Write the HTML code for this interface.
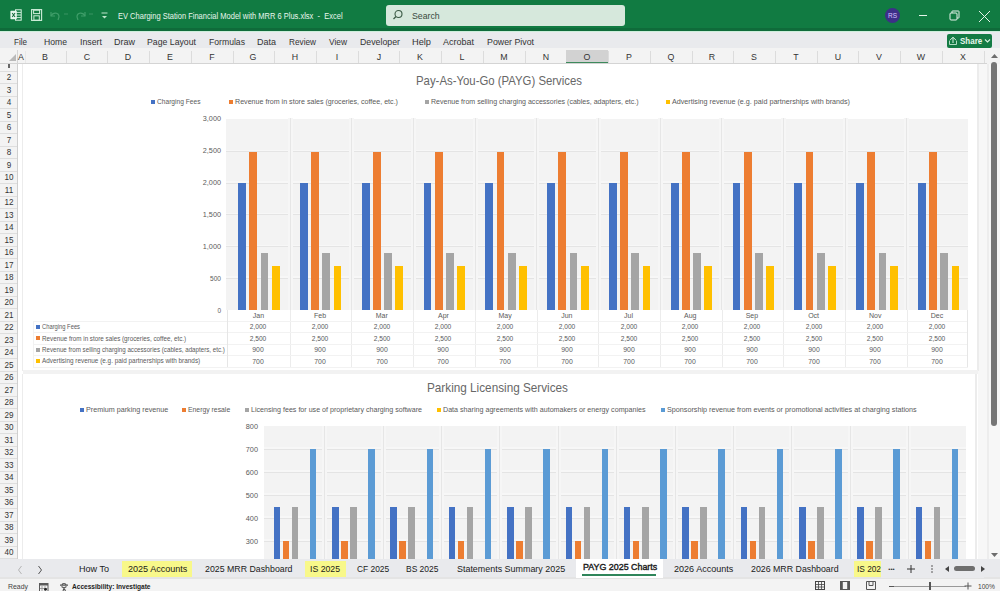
<!DOCTYPE html><html><head><meta charset='utf-8'><title>Excel</title><style>
*{margin:0;padding:0;box-sizing:border-box}
html,body{width:1000px;height:591px;overflow:hidden;background:#fff;font-family:"Liberation Sans", sans-serif;}
body{position:relative}
.ab{position:absolute}
.t{position:absolute;white-space:nowrap;line-height:1}
svg{position:absolute;overflow:visible}
</style></head><body>
<div class='ab' style='left:0px;top:0px;width:1000px;height:30px;background:#117b42;'></div>
<div class='ab' style='left:0px;top:28px;width:1000px;height:2.5px;background:#0f6b3a;'></div>
<div class='ab' style='left:0px;top:30.5px;width:1000px;height:1px;background:#cdeedb;'></div>
<svg style='left:10px;top:9px' width='12' height='12' viewBox='0 0 12 12'><rect x='5.5' y='0.8' width='5.7' height='10.4' fill='none' stroke='#d8f2e1' stroke-width='1'/><path d='M6 3.4 H11 M6 6 H11 M6 8.6 H11' stroke='#c9ebd5' stroke-width='1'/><rect x='0.4' y='1.8' width='6.4' height='8.4' rx='0.6' fill='#e6f7ec'/><path d='M2.2 4 L5 8 M5 4 L2.2 8' stroke='#1b6e40' stroke-width='1.1'/></svg>
<svg style='left:31px;top:9px' width='12' height='12' viewBox='0 0 12 12'><rect x='0.6' y='0.6' width='10' height='10.8' fill='none' stroke='#cfeeda' stroke-width='1.1'/><rect x='2.6' y='1.2' width='6' height='3.4' fill='none' stroke='#cfeeda' stroke-width='1'/><rect x='2.9' y='6.8' width='5.4' height='4.4' fill='none' stroke='#cfeeda' stroke-width='1'/></svg>
<svg style='left:48px;top:9px' width='14' height='12' viewBox='0 0 14 12'><path d='M3 3 L3 7 L7 7' fill='none' stroke='#3f9d69' stroke-width='1.2'/><path d='M3 7 C5 3 11 3 11 8 L10 11' fill='none' stroke='#3f9d69' stroke-width='1.2'/></svg>
<svg style='left:63px;top:13px' width='6' height='4' viewBox='0 0 6 4'><path d='M1 1 L5 1' stroke='#3a9463' stroke-width='1'/></svg>
<svg style='left:74px;top:9px' width='14' height='12' viewBox='0 0 14 12'><path d='M11 3 L11 7 L7 7' fill='none' stroke='#3f9d69' stroke-width='1.2'/><path d='M11 7 C9 3 3 3 3 8 L4 11' fill='none' stroke='#3f9d69' stroke-width='1.2'/></svg>
<svg style='left:88px;top:13px' width='6' height='4' viewBox='0 0 6 4'><path d='M1 1 L5 1' stroke='#3a9463' stroke-width='1'/></svg>
<svg style='left:100px;top:11px' width='9' height='9' viewBox='0 0 9 9'><path d='M1.5 2 L7.5 2' stroke='#bfe6cc' stroke-width='1'/><path d='M2 5 L7 5 L4.5 7.5 Z' fill='#bfe6cc'/></svg>
<div class='t' style='left:117.7px;top:15.5px;font-size:8.4px;color:#e8f6ec;font-weight:400;transform:translateY(-50%) scaleX(0.8969);transform-origin:left center;'>EV Charging Station Financial Model with MRR 6 Plus.xlsx&nbsp; -&nbsp; Excel</div>
<div class='ab' style='left:386px;top:5px;width:239px;height:21px;background:#d6e8dc;border-radius:3px'></div>
<svg style='left:392px;top:9px' width='12' height='12' viewBox='0 0 12 12'><circle cx='6.5' cy='5' r='3.5' fill='none' stroke='#3b5a45' stroke-width='1.1'/><path d='M4 7.5 L1.5 10' stroke='#3b5a45' stroke-width='1.2'/></svg>
<div class='t' style='left:412px;top:15.5px;font-size:9.5px;color:#3a4a40;font-weight:400;transform:translateY(-50%) scaleX(0.92);transform-origin:left center;'>Search</div>
<svg style='left:884px;top:7px' width='17' height='17' viewBox='0 0 17 17'><circle cx='8.5' cy='8.5' r='7.5' fill='#3d2f88'/><text x='8.5' y='11' font-size='6.5' fill='#d9c2ff' text-anchor='middle' font-family='Liberation Sans'>RS</text></svg>
<div class='ab' style='left:919px;top:15px;width:8px;height:1px;background:#e6f4ea;'></div>
<svg style='left:948.5px;top:10px' width='11' height='11' viewBox='0 0 11 11'><rect x='1' y='3' width='7' height='7' rx='1' fill='none' stroke='#e6f4ea' stroke-width='1'/><path d='M3 3 L3 1.2 Q3 1 3.5 1 L9.5 1 Q10 1 10 1.5 L10 7.5 Q10 8 9.5 8 L8 8' fill='none' stroke='#e6f4ea' stroke-width='1'/></svg>
<svg style='left:978px;top:9.5px' width='13' height='13' viewBox='0 0 13 13'><path d='M1 1 L12 12 M12 1 L1 12' stroke='#e6f4ea' stroke-width='1'/></svg>
<div class='ab' style='left:0px;top:31.5px;width:1000px;height:16.5px;background:#e9eaed;'></div>
<div class='t' style='left:14px;top:41.5px;font-size:9.5px;color:#333333;font-weight:400;transform:translateY(-50%) scaleX(0.849);transform-origin:left center;'>File</div>
<div class='t' style='left:44px;top:41.5px;font-size:9.5px;color:#333333;font-weight:400;transform:translateY(-50%) scaleX(0.9075);transform-origin:left center;'>Home</div>
<div class='t' style='left:80px;top:41.5px;font-size:9.5px;color:#333333;font-weight:400;transform:translateY(-50%) scaleX(0.9257);transform-origin:left center;'>Insert</div>
<div class='t' style='left:114px;top:41.5px;font-size:9.5px;color:#333333;font-weight:400;transform:translateY(-50%) scaleX(0.9471);transform-origin:left center;'>Draw</div>
<div class='t' style='left:147px;top:41.5px;font-size:9.5px;color:#333333;font-weight:400;transform:translateY(-50%) scaleX(0.9183);transform-origin:left center;'>Page Layout</div>
<div class='t' style='left:209px;top:41.5px;font-size:9.5px;color:#333333;font-weight:400;transform:translateY(-50%) scaleX(0.9092);transform-origin:left center;'>Formulas</div>
<div class='t' style='left:257px;top:41.5px;font-size:9.5px;color:#333333;font-weight:400;transform:translateY(-50%) scaleX(0.9463);transform-origin:left center;'>Data</div>
<div class='t' style='left:289px;top:41.5px;font-size:9.5px;color:#333333;font-weight:400;transform:translateY(-50%) scaleX(0.8666);transform-origin:left center;'>Review</div>
<div class='t' style='left:329px;top:41.5px;font-size:9.5px;color:#333333;font-weight:400;transform:translateY(-50%) scaleX(0.8814);transform-origin:left center;'>View</div>
<div class='t' style='left:360px;top:41.5px;font-size:9.5px;color:#333333;font-weight:400;transform:translateY(-50%) scaleX(0.9235);transform-origin:left center;'>Developer</div>
<div class='t' style='left:412px;top:41.5px;font-size:9.5px;color:#333333;font-weight:400;transform:translateY(-50%) scaleX(0.972);transform-origin:left center;'>Help</div>
<div class='t' style='left:443px;top:41.5px;font-size:9.5px;color:#333333;font-weight:400;transform:translateY(-50%) scaleX(0.9466);transform-origin:left center;'>Acrobat</div>
<div class='t' style='left:487px;top:41.5px;font-size:9.5px;color:#333333;font-weight:400;transform:translateY(-50%) scaleX(0.9273);transform-origin:left center;'>Power Pivot</div>
<div class='ab' style='left:946.5px;top:33.6px;width:45.7px;height:14.7px;background:#137b44;border-radius:2px'></div>
<svg style='left:948px;top:36px' width='10' height='10' viewBox='0 0 10 10'><path d='M1.5 5 L1.5 8.5 L8.5 8.5 L8.5 5' fill='none' stroke='#bfe8cf' stroke-width='0.9'/><path d='M5 1.2 L8.2 4.4 M5 1.2 L1.8 4.4 M5 1.5 L5 7' fill='none' stroke='#d9f3e2' stroke-width='1'/></svg>
<div class='t' style='left:959.8px;top:41.8px;font-size:9.2px;color:#e9f8ee;font-weight:700;transform:translateY(-50%) scaleX(0.869);transform-origin:left center;'>Share</div>
<svg style='left:984px;top:38px' width='7' height='6' viewBox='0 0 7 6'><path d='M1 1.5 L3.5 4 L6 1.5' fill='none' stroke='#d9f3e2' stroke-width='1.1'/></svg>
<div class='ab' style='left:0px;top:48px;width:987px;height:16px;background:#f3f3f3;'></div>
<div class='ab' style='left:0px;top:63px;width:987px;height:1px;background:#d4d4d4;'></div>
<svg style='left:8px;top:53px' width='9' height='9' viewBox='0 0 9 9'><path d='M8 1 L8 8 L1 8 Z' fill='#b9b9b9'/></svg>
<div class='ab' style='left:17px;top:50px;width:1px;height:14px;background:#d4d4d4;'></div>
<div class='ab' style='left:24.5px;top:51px;width:1px;height:12px;background:#e8e8e8;'></div>
<div class='t' style='left:20.8px;top:57px;font-size:9.6px;color:#333;font-weight:400;transform:translateX(-50%) translateY(-50%) scaleX(0.92);transform-origin:center center;'>A</div>
<div class='ab' style='left:65.72px;top:51px;width:1px;height:12px;background:#dcdcdc;'></div>
<div class='t' style='left:44.86px;top:57px;font-size:9.6px;color:#333;font-weight:400;transform:translateX(-50%) translateY(-50%) scaleX(0.92);transform-origin:center center;'>B</div>
<div class='ab' style='left:107.44px;top:51px;width:1px;height:12px;background:#dcdcdc;'></div>
<div class='t' style='left:86.58px;top:57px;font-size:9.6px;color:#333;font-weight:400;transform:translateX(-50%) translateY(-50%) scaleX(0.92);transform-origin:center center;'>C</div>
<div class='ab' style='left:149.16px;top:51px;width:1px;height:12px;background:#dcdcdc;'></div>
<div class='t' style='left:128.3px;top:57px;font-size:9.6px;color:#333;font-weight:400;transform:translateX(-50%) translateY(-50%) scaleX(0.92);transform-origin:center center;'>D</div>
<div class='ab' style='left:190.88px;top:51px;width:1px;height:12px;background:#dcdcdc;'></div>
<div class='t' style='left:170.02px;top:57px;font-size:9.6px;color:#333;font-weight:400;transform:translateX(-50%) translateY(-50%) scaleX(0.92);transform-origin:center center;'>E</div>
<div class='ab' style='left:232.6px;top:51px;width:1px;height:12px;background:#dcdcdc;'></div>
<div class='t' style='left:211.74px;top:57px;font-size:9.6px;color:#333;font-weight:400;transform:translateX(-50%) translateY(-50%) scaleX(0.92);transform-origin:center center;'>F</div>
<div class='ab' style='left:274.32px;top:51px;width:1px;height:12px;background:#dcdcdc;'></div>
<div class='t' style='left:253.46px;top:57px;font-size:9.6px;color:#333;font-weight:400;transform:translateX(-50%) translateY(-50%) scaleX(0.92);transform-origin:center center;'>G</div>
<div class='ab' style='left:316.04px;top:51px;width:1px;height:12px;background:#dcdcdc;'></div>
<div class='t' style='left:295.18px;top:57px;font-size:9.6px;color:#333;font-weight:400;transform:translateX(-50%) translateY(-50%) scaleX(0.92);transform-origin:center center;'>H</div>
<div class='ab' style='left:357.76px;top:51px;width:1px;height:12px;background:#dcdcdc;'></div>
<div class='t' style='left:336.9px;top:57px;font-size:9.6px;color:#333;font-weight:400;transform:translateX(-50%) translateY(-50%) scaleX(0.92);transform-origin:center center;'>I</div>
<div class='ab' style='left:399.48px;top:51px;width:1px;height:12px;background:#dcdcdc;'></div>
<div class='t' style='left:378.62px;top:57px;font-size:9.6px;color:#333;font-weight:400;transform:translateX(-50%) translateY(-50%) scaleX(0.92);transform-origin:center center;'>J</div>
<div class='ab' style='left:441.2px;top:51px;width:1px;height:12px;background:#dcdcdc;'></div>
<div class='t' style='left:420.34px;top:57px;font-size:9.6px;color:#333;font-weight:400;transform:translateX(-50%) translateY(-50%) scaleX(0.92);transform-origin:center center;'>K</div>
<div class='ab' style='left:482.92px;top:51px;width:1px;height:12px;background:#dcdcdc;'></div>
<div class='t' style='left:462.06px;top:57px;font-size:9.6px;color:#333;font-weight:400;transform:translateX(-50%) translateY(-50%) scaleX(0.92);transform-origin:center center;'>L</div>
<div class='ab' style='left:524.64px;top:51px;width:1px;height:12px;background:#dcdcdc;'></div>
<div class='t' style='left:503.78px;top:57px;font-size:9.6px;color:#333;font-weight:400;transform:translateX(-50%) translateY(-50%) scaleX(0.92);transform-origin:center center;'>M</div>
<div class='ab' style='left:566.36px;top:51px;width:1px;height:12px;background:#dcdcdc;'></div>
<div class='t' style='left:545.5px;top:57px;font-size:9.6px;color:#333;font-weight:400;transform:translateX(-50%) translateY(-50%) scaleX(0.92);transform-origin:center center;'>N</div>
<div class='ab' style='left:565.86px;top:50px;width:41.72px;height:13.5px;background:#d2d2d2;'></div>
<div class='ab' style='left:565.86px;top:61.8px;width:41.72px;height:1.7px;background:#3d8a5c;'></div>
<div class='ab' style='left:608.08px;top:51px;width:1px;height:12px;background:#dcdcdc;'></div>
<div class='t' style='left:587.22px;top:57px;font-size:9.6px;color:#333;font-weight:400;transform:translateX(-50%) translateY(-50%) scaleX(0.92);transform-origin:center center;'>O</div>
<div class='ab' style='left:649.8px;top:51px;width:1px;height:12px;background:#dcdcdc;'></div>
<div class='t' style='left:628.94px;top:57px;font-size:9.6px;color:#333;font-weight:400;transform:translateX(-50%) translateY(-50%) scaleX(0.92);transform-origin:center center;'>P</div>
<div class='ab' style='left:691.52px;top:51px;width:1px;height:12px;background:#dcdcdc;'></div>
<div class='t' style='left:670.66px;top:57px;font-size:9.6px;color:#333;font-weight:400;transform:translateX(-50%) translateY(-50%) scaleX(0.92);transform-origin:center center;'>Q</div>
<div class='ab' style='left:733.24px;top:51px;width:1px;height:12px;background:#dcdcdc;'></div>
<div class='t' style='left:712.38px;top:57px;font-size:9.6px;color:#333;font-weight:400;transform:translateX(-50%) translateY(-50%) scaleX(0.92);transform-origin:center center;'>R</div>
<div class='ab' style='left:774.96px;top:51px;width:1px;height:12px;background:#dcdcdc;'></div>
<div class='t' style='left:754.1px;top:57px;font-size:9.6px;color:#333;font-weight:400;transform:translateX(-50%) translateY(-50%) scaleX(0.92);transform-origin:center center;'>S</div>
<div class='ab' style='left:816.68px;top:51px;width:1px;height:12px;background:#dcdcdc;'></div>
<div class='t' style='left:795.82px;top:57px;font-size:9.6px;color:#333;font-weight:400;transform:translateX(-50%) translateY(-50%) scaleX(0.92);transform-origin:center center;'>T</div>
<div class='ab' style='left:858.4px;top:51px;width:1px;height:12px;background:#dcdcdc;'></div>
<div class='t' style='left:837.54px;top:57px;font-size:9.6px;color:#333;font-weight:400;transform:translateX(-50%) translateY(-50%) scaleX(0.92);transform-origin:center center;'>U</div>
<div class='ab' style='left:900.12px;top:51px;width:1px;height:12px;background:#dcdcdc;'></div>
<div class='t' style='left:879.26px;top:57px;font-size:9.6px;color:#333;font-weight:400;transform:translateX(-50%) translateY(-50%) scaleX(0.92);transform-origin:center center;'>V</div>
<div class='ab' style='left:941.84px;top:51px;width:1px;height:12px;background:#dcdcdc;'></div>
<div class='t' style='left:920.98px;top:57px;font-size:9.6px;color:#333;font-weight:400;transform:translateX(-50%) translateY(-50%) scaleX(0.92);transform-origin:center center;'>W</div>
<div class='ab' style='left:983.56px;top:51px;width:1px;height:12px;background:#dcdcdc;'></div>
<div class='t' style='left:962.7px;top:57px;font-size:9.6px;color:#333;font-weight:400;transform:translateX(-50%) translateY(-50%) scaleX(0.92);transform-origin:center center;'>X</div>
<div class='ab' style='left:0px;top:64px;width:17px;height:495px;background:#f3f3f3;'></div>
<div class='ab' style='left:17px;top:64px;width:1px;height:495px;background:#cfcfcf;'></div>
<div class='ab' style='left:0px;top:70.5px;width:17px;height:1px;background:#dedede;'></div>
<div class='ab' style='left:8px;top:64px;width:1.6px;height:4.2px;background:#666;'></div>
<div class='ab' style='left:0px;top:83.0px;width:17px;height:1px;background:#dedede;'></div>
<div class='t' style='left:8.5px;top:77.25px;font-size:9px;color:#333;font-weight:400;transform:translateX(-50%) translateY(-50%) scaleX(0.9);transform-origin:center center;'>2</div>
<div class='ab' style='left:0px;top:95.5px;width:17px;height:1px;background:#dedede;'></div>
<div class='t' style='left:8.5px;top:89.75px;font-size:9px;color:#333;font-weight:400;transform:translateX(-50%) translateY(-50%) scaleX(0.9);transform-origin:center center;'>3</div>
<div class='ab' style='left:0px;top:108.0px;width:17px;height:1px;background:#dedede;'></div>
<div class='t' style='left:8.5px;top:102.25px;font-size:9px;color:#333;font-weight:400;transform:translateX(-50%) translateY(-50%) scaleX(0.9);transform-origin:center center;'>4</div>
<div class='ab' style='left:0px;top:120.5px;width:17px;height:1px;background:#dedede;'></div>
<div class='t' style='left:8.5px;top:114.75px;font-size:9px;color:#333;font-weight:400;transform:translateX(-50%) translateY(-50%) scaleX(0.9);transform-origin:center center;'>5</div>
<div class='ab' style='left:0px;top:133.0px;width:17px;height:1px;background:#dedede;'></div>
<div class='t' style='left:8.5px;top:127.25px;font-size:9px;color:#333;font-weight:400;transform:translateX(-50%) translateY(-50%) scaleX(0.9);transform-origin:center center;'>6</div>
<div class='ab' style='left:0px;top:145.5px;width:17px;height:1px;background:#dedede;'></div>
<div class='t' style='left:8.5px;top:139.75px;font-size:9px;color:#333;font-weight:400;transform:translateX(-50%) translateY(-50%) scaleX(0.9);transform-origin:center center;'>7</div>
<div class='ab' style='left:0px;top:158.0px;width:17px;height:1px;background:#dedede;'></div>
<div class='t' style='left:8.5px;top:152.25px;font-size:9px;color:#333;font-weight:400;transform:translateX(-50%) translateY(-50%) scaleX(0.9);transform-origin:center center;'>8</div>
<div class='ab' style='left:0px;top:170.5px;width:17px;height:1px;background:#dedede;'></div>
<div class='t' style='left:8.5px;top:164.75px;font-size:9px;color:#333;font-weight:400;transform:translateX(-50%) translateY(-50%) scaleX(0.9);transform-origin:center center;'>9</div>
<div class='ab' style='left:0px;top:183.0px;width:17px;height:1px;background:#dedede;'></div>
<div class='t' style='left:8.5px;top:177.25px;font-size:9px;color:#333;font-weight:400;transform:translateX(-50%) translateY(-50%) scaleX(0.9);transform-origin:center center;'>10</div>
<div class='ab' style='left:0px;top:195.5px;width:17px;height:1px;background:#dedede;'></div>
<div class='t' style='left:8.5px;top:189.75px;font-size:9px;color:#333;font-weight:400;transform:translateX(-50%) translateY(-50%) scaleX(0.9);transform-origin:center center;'>11</div>
<div class='ab' style='left:0px;top:208.0px;width:17px;height:1px;background:#dedede;'></div>
<div class='t' style='left:8.5px;top:202.25px;font-size:9px;color:#333;font-weight:400;transform:translateX(-50%) translateY(-50%) scaleX(0.9);transform-origin:center center;'>12</div>
<div class='ab' style='left:0px;top:220.5px;width:17px;height:1px;background:#dedede;'></div>
<div class='t' style='left:8.5px;top:214.75px;font-size:9px;color:#333;font-weight:400;transform:translateX(-50%) translateY(-50%) scaleX(0.9);transform-origin:center center;'>13</div>
<div class='ab' style='left:0px;top:233.0px;width:17px;height:1px;background:#dedede;'></div>
<div class='t' style='left:8.5px;top:227.25px;font-size:9px;color:#333;font-weight:400;transform:translateX(-50%) translateY(-50%) scaleX(0.9);transform-origin:center center;'>14</div>
<div class='ab' style='left:0px;top:245.5px;width:17px;height:1px;background:#dedede;'></div>
<div class='t' style='left:8.5px;top:239.75px;font-size:9px;color:#333;font-weight:400;transform:translateX(-50%) translateY(-50%) scaleX(0.9);transform-origin:center center;'>15</div>
<div class='ab' style='left:0px;top:258.0px;width:17px;height:1px;background:#dedede;'></div>
<div class='t' style='left:8.5px;top:252.25px;font-size:9px;color:#333;font-weight:400;transform:translateX(-50%) translateY(-50%) scaleX(0.9);transform-origin:center center;'>16</div>
<div class='ab' style='left:0px;top:270.5px;width:17px;height:1px;background:#dedede;'></div>
<div class='t' style='left:8.5px;top:264.75px;font-size:9px;color:#333;font-weight:400;transform:translateX(-50%) translateY(-50%) scaleX(0.9);transform-origin:center center;'>17</div>
<div class='ab' style='left:0px;top:283.0px;width:17px;height:1px;background:#dedede;'></div>
<div class='t' style='left:8.5px;top:277.25px;font-size:9px;color:#333;font-weight:400;transform:translateX(-50%) translateY(-50%) scaleX(0.9);transform-origin:center center;'>18</div>
<div class='ab' style='left:0px;top:295.5px;width:17px;height:1px;background:#dedede;'></div>
<div class='t' style='left:8.5px;top:289.75px;font-size:9px;color:#333;font-weight:400;transform:translateX(-50%) translateY(-50%) scaleX(0.9);transform-origin:center center;'>19</div>
<div class='ab' style='left:0px;top:308.0px;width:17px;height:1px;background:#dedede;'></div>
<div class='t' style='left:8.5px;top:302.25px;font-size:9px;color:#333;font-weight:400;transform:translateX(-50%) translateY(-50%) scaleX(0.9);transform-origin:center center;'>20</div>
<div class='ab' style='left:0px;top:320.5px;width:17px;height:1px;background:#dedede;'></div>
<div class='t' style='left:8.5px;top:314.75px;font-size:9px;color:#333;font-weight:400;transform:translateX(-50%) translateY(-50%) scaleX(0.9);transform-origin:center center;'>21</div>
<div class='ab' style='left:0px;top:333.0px;width:17px;height:1px;background:#dedede;'></div>
<div class='t' style='left:8.5px;top:327.25px;font-size:9px;color:#333;font-weight:400;transform:translateX(-50%) translateY(-50%) scaleX(0.9);transform-origin:center center;'>22</div>
<div class='ab' style='left:0px;top:345.5px;width:17px;height:1px;background:#dedede;'></div>
<div class='t' style='left:8.5px;top:339.75px;font-size:9px;color:#333;font-weight:400;transform:translateX(-50%) translateY(-50%) scaleX(0.9);transform-origin:center center;'>23</div>
<div class='ab' style='left:0px;top:358.0px;width:17px;height:1px;background:#dedede;'></div>
<div class='t' style='left:8.5px;top:352.25px;font-size:9px;color:#333;font-weight:400;transform:translateX(-50%) translateY(-50%) scaleX(0.9);transform-origin:center center;'>24</div>
<div class='ab' style='left:0px;top:370.5px;width:17px;height:1px;background:#dedede;'></div>
<div class='t' style='left:8.5px;top:364.75px;font-size:9px;color:#333;font-weight:400;transform:translateX(-50%) translateY(-50%) scaleX(0.9);transform-origin:center center;'>25</div>
<div class='ab' style='left:0px;top:383.0px;width:17px;height:1px;background:#dedede;'></div>
<div class='t' style='left:8.5px;top:377.25px;font-size:9px;color:#333;font-weight:400;transform:translateX(-50%) translateY(-50%) scaleX(0.9);transform-origin:center center;'>26</div>
<div class='ab' style='left:0px;top:395.5px;width:17px;height:1px;background:#dedede;'></div>
<div class='t' style='left:8.5px;top:389.75px;font-size:9px;color:#333;font-weight:400;transform:translateX(-50%) translateY(-50%) scaleX(0.9);transform-origin:center center;'>27</div>
<div class='ab' style='left:0px;top:408.0px;width:17px;height:1px;background:#dedede;'></div>
<div class='t' style='left:8.5px;top:402.25px;font-size:9px;color:#333;font-weight:400;transform:translateX(-50%) translateY(-50%) scaleX(0.9);transform-origin:center center;'>28</div>
<div class='ab' style='left:0px;top:420.5px;width:17px;height:1px;background:#dedede;'></div>
<div class='t' style='left:8.5px;top:414.75px;font-size:9px;color:#333;font-weight:400;transform:translateX(-50%) translateY(-50%) scaleX(0.9);transform-origin:center center;'>29</div>
<div class='ab' style='left:0px;top:433.0px;width:17px;height:1px;background:#dedede;'></div>
<div class='t' style='left:8.5px;top:427.25px;font-size:9px;color:#333;font-weight:400;transform:translateX(-50%) translateY(-50%) scaleX(0.9);transform-origin:center center;'>30</div>
<div class='ab' style='left:0px;top:445.5px;width:17px;height:1px;background:#dedede;'></div>
<div class='t' style='left:8.5px;top:439.75px;font-size:9px;color:#333;font-weight:400;transform:translateX(-50%) translateY(-50%) scaleX(0.9);transform-origin:center center;'>31</div>
<div class='ab' style='left:0px;top:458.0px;width:17px;height:1px;background:#dedede;'></div>
<div class='t' style='left:8.5px;top:452.25px;font-size:9px;color:#333;font-weight:400;transform:translateX(-50%) translateY(-50%) scaleX(0.9);transform-origin:center center;'>32</div>
<div class='ab' style='left:0px;top:470.5px;width:17px;height:1px;background:#dedede;'></div>
<div class='t' style='left:8.5px;top:464.75px;font-size:9px;color:#333;font-weight:400;transform:translateX(-50%) translateY(-50%) scaleX(0.9);transform-origin:center center;'>33</div>
<div class='ab' style='left:0px;top:483.0px;width:17px;height:1px;background:#dedede;'></div>
<div class='t' style='left:8.5px;top:477.25px;font-size:9px;color:#333;font-weight:400;transform:translateX(-50%) translateY(-50%) scaleX(0.9);transform-origin:center center;'>34</div>
<div class='ab' style='left:0px;top:495.5px;width:17px;height:1px;background:#dedede;'></div>
<div class='t' style='left:8.5px;top:489.75px;font-size:9px;color:#333;font-weight:400;transform:translateX(-50%) translateY(-50%) scaleX(0.9);transform-origin:center center;'>35</div>
<div class='ab' style='left:0px;top:508.0px;width:17px;height:1px;background:#dedede;'></div>
<div class='t' style='left:8.5px;top:502.25px;font-size:9px;color:#333;font-weight:400;transform:translateX(-50%) translateY(-50%) scaleX(0.9);transform-origin:center center;'>36</div>
<div class='ab' style='left:0px;top:520.5px;width:17px;height:1px;background:#dedede;'></div>
<div class='t' style='left:8.5px;top:514.75px;font-size:9px;color:#333;font-weight:400;transform:translateX(-50%) translateY(-50%) scaleX(0.9);transform-origin:center center;'>37</div>
<div class='ab' style='left:0px;top:533.0px;width:17px;height:1px;background:#dedede;'></div>
<div class='t' style='left:8.5px;top:527.25px;font-size:9px;color:#333;font-weight:400;transform:translateX(-50%) translateY(-50%) scaleX(0.9);transform-origin:center center;'>38</div>
<div class='ab' style='left:0px;top:545.5px;width:17px;height:1px;background:#dedede;'></div>
<div class='t' style='left:8.5px;top:539.75px;font-size:9px;color:#333;font-weight:400;transform:translateX(-50%) translateY(-50%) scaleX(0.9);transform-origin:center center;'>39</div>
<div class='ab' style='left:0px;top:558.0px;width:17px;height:1px;background:#dedede;'></div>
<div class='t' style='left:8.5px;top:552.25px;font-size:9px;color:#333;font-weight:400;transform:translateX(-50%) translateY(-50%) scaleX(0.9);transform-origin:center center;'>40</div>
<div class='ab' style='left:978px;top:64px;width:22px;height:495px;background:#f7f7f7;'></div>
<div class='ab' style='left:987px;top:64px;width:2px;height:495px;background:#ededed;'></div>
<div class='ab' style='left:987px;top:48px;width:13px;height:16px;background:#f3f3f3;'></div>
<svg style='left:990px;top:53px' width='9' height='6' viewBox='0 0 9 6'><path d='M1 5 L4.5 1 L8 5 Z' fill='#6d6d6d'/></svg>
<div class='ab' style='left:991px;top:62px;width:6px;height:364px;background:#767676;border-radius:3px'></div>
<svg style='left:990px;top:552px' width='9' height='6' viewBox='0 0 9 6'><path d='M1 1 L4.5 5 L8 1 Z' fill='#6d6d6d'/></svg>
<div class='ab' style='left:22.5px;top:64px;width:955px;height:307px;background:#ffffff;'></div>
<div class='ab' style='left:21.8px;top:64px;width:1px;height:307px;background:#ececec;'></div>
<div class='ab' style='left:977px;top:64px;width:1.5px;height:307px;background:#ececec;'></div>
<div class='t' style='left:416px;top:80.5px;font-size:13.3px;color:#676767;font-weight:400;transform:translateY(-50%) scaleX(0.8552);transform-origin:left center;'>Pay-As-You-Go (PAYG) Services</div>
<div class='ab' style='left:150.5px;top:100px;width:4px;height:4px;background:#4472c4;'></div>
<div class='t' style='left:156.5px;top:102.4px;font-size:7.5px;color:#5a5a5a;font-weight:400;transform:translateY(-50%) scaleX(0.8841);transform-origin:left center;'>Charging Fees</div>
<div class='ab' style='left:228.6px;top:100px;width:4px;height:4px;background:#ed7d31;'></div>
<div class='t' style='left:234.6px;top:102.4px;font-size:7.5px;color:#5a5a5a;font-weight:400;transform:translateY(-50%) scaleX(0.9475);transform-origin:left center;'>Revenue from in store sales (groceries, coffee, etc.)</div>
<div class='ab' style='left:425px;top:100px;width:4px;height:4px;background:#a5a5a5;'></div>
<div class='t' style='left:431.1px;top:102.4px;font-size:7.5px;color:#5a5a5a;font-weight:400;transform:translateY(-50%) scaleX(0.9378);transform-origin:left center;'>Revenue from selling charging accessories (cables, adapters, etc.)</div>
<div class='ab' style='left:665.8px;top:100px;width:4px;height:4px;background:#ffc000;'></div>
<div class='t' style='left:672.2px;top:102.4px;font-size:7.5px;color:#5a5a5a;font-weight:400;transform:translateY(-50%) scaleX(0.9573);transform-origin:left center;'>Advertising revenue (e.g. paid partnerships with brands)</div>
<div class='ab' style='left:226.3px;top:119px;width:741.5px;height:191px;background:#f3f3f3;'></div>
<div class='t' style='left:221px;top:309.8px;font-size:7px;color:#5a5a5a;font-weight:400;transform:translateX(-100%) translateY(-50%) scaleX(0.9216);transform-origin:right center;'>0</div>
<div class='ab' style='left:226.3px;top:276.3px;width:741.5px;height:2px;background:#f7f7f7;'></div>
<div class='ab' style='left:226.3px;top:277.8px;width:741.5px;height:1px;background:#e4e4e4;'></div>
<div class='t' style='left:221px;top:277.8px;font-size:7px;color:#5a5a5a;font-weight:400;transform:translateX(-100%) translateY(-50%) scaleX(0.9343);transform-origin:right center;'>500</div>
<div class='ab' style='left:226.3px;top:244.6px;width:741.5px;height:2px;background:#f7f7f7;'></div>
<div class='ab' style='left:226.3px;top:246.1px;width:741.5px;height:1px;background:#e4e4e4;'></div>
<div class='t' style='left:221px;top:245.8px;font-size:7px;color:#5a5a5a;font-weight:400;transform:translateX(-100%) translateY(-50%) scaleX(1.0381);transform-origin:right center;'>1,000</div>
<div class='ab' style='left:226.3px;top:212.9px;width:741.5px;height:2px;background:#f7f7f7;'></div>
<div class='ab' style='left:226.3px;top:214.4px;width:741.5px;height:1px;background:#e4e4e4;'></div>
<div class='t' style='left:221px;top:213.8px;font-size:7px;color:#5a5a5a;font-weight:400;transform:translateX(-100%) translateY(-50%) scaleX(1.0381);transform-origin:right center;'>1,500</div>
<div class='ab' style='left:226.3px;top:181.2px;width:741.5px;height:2px;background:#f7f7f7;'></div>
<div class='ab' style='left:226.3px;top:182.7px;width:741.5px;height:1px;background:#e4e4e4;'></div>
<div class='t' style='left:221px;top:181.8px;font-size:7px;color:#5a5a5a;font-weight:400;transform:translateX(-100%) translateY(-50%) scaleX(1.0381);transform-origin:right center;'>2,000</div>
<div class='ab' style='left:226.3px;top:149.5px;width:741.5px;height:2px;background:#f7f7f7;'></div>
<div class='ab' style='left:226.3px;top:151.0px;width:741.5px;height:1px;background:#e4e4e4;'></div>
<div class='t' style='left:221px;top:149.8px;font-size:7px;color:#5a5a5a;font-weight:400;transform:translateX(-100%) translateY(-50%) scaleX(1.0381);transform-origin:right center;'>2,500</div>
<div class='t' style='left:221px;top:117.8px;font-size:7px;color:#5a5a5a;font-weight:400;transform:translateX(-100%) translateY(-50%) scaleX(1.0381);transform-origin:right center;'>3,000</div>
<div class='ab' style='left:287.58px;top:118.2px;width:2px;height:191.8px;background:#f6f6f6;'></div>
<div class='ab' style='left:290.58px;top:118.2px;width:2px;height:191.8px;background:#f6f6f6;'></div>
<div class='ab' style='left:289.58px;top:118.2px;width:1px;height:191.8px;background:#e6e6e6;'></div>
<div class='ab' style='left:289.78px;top:310px;width:1px;height:57px;background:#ececec;'></div>
<div class='ab' style='left:349.27px;top:118.2px;width:2px;height:191.8px;background:#f6f6f6;'></div>
<div class='ab' style='left:352.27px;top:118.2px;width:2px;height:191.8px;background:#f6f6f6;'></div>
<div class='ab' style='left:351.27px;top:118.2px;width:1px;height:191.8px;background:#e6e6e6;'></div>
<div class='ab' style='left:351.47px;top:310px;width:1px;height:57px;background:#ececec;'></div>
<div class='ab' style='left:410.95px;top:118.2px;width:2px;height:191.8px;background:#f6f6f6;'></div>
<div class='ab' style='left:413.95px;top:118.2px;width:2px;height:191.8px;background:#f6f6f6;'></div>
<div class='ab' style='left:412.95px;top:118.2px;width:1px;height:191.8px;background:#e6e6e6;'></div>
<div class='ab' style='left:413.15px;top:310px;width:1px;height:57px;background:#ececec;'></div>
<div class='ab' style='left:472.63px;top:118.2px;width:2px;height:191.8px;background:#f6f6f6;'></div>
<div class='ab' style='left:475.63px;top:118.2px;width:2px;height:191.8px;background:#f6f6f6;'></div>
<div class='ab' style='left:474.63px;top:118.2px;width:1px;height:191.8px;background:#e6e6e6;'></div>
<div class='ab' style='left:474.83px;top:310px;width:1px;height:57px;background:#ececec;'></div>
<div class='ab' style='left:534.32px;top:118.2px;width:2px;height:191.8px;background:#f6f6f6;'></div>
<div class='ab' style='left:537.32px;top:118.2px;width:2px;height:191.8px;background:#f6f6f6;'></div>
<div class='ab' style='left:536.32px;top:118.2px;width:1px;height:191.8px;background:#e6e6e6;'></div>
<div class='ab' style='left:536.52px;top:310px;width:1px;height:57px;background:#ececec;'></div>
<div class='ab' style='left:596.0px;top:118.2px;width:2px;height:191.8px;background:#f6f6f6;'></div>
<div class='ab' style='left:599.0px;top:118.2px;width:2px;height:191.8px;background:#f6f6f6;'></div>
<div class='ab' style='left:598.0px;top:118.2px;width:1px;height:191.8px;background:#e6e6e6;'></div>
<div class='ab' style='left:598.2px;top:310px;width:1px;height:57px;background:#ececec;'></div>
<div class='ab' style='left:657.68px;top:118.2px;width:2px;height:191.8px;background:#f6f6f6;'></div>
<div class='ab' style='left:660.68px;top:118.2px;width:2px;height:191.8px;background:#f6f6f6;'></div>
<div class='ab' style='left:659.68px;top:118.2px;width:1px;height:191.8px;background:#e6e6e6;'></div>
<div class='ab' style='left:659.88px;top:310px;width:1px;height:57px;background:#ececec;'></div>
<div class='ab' style='left:719.37px;top:118.2px;width:2px;height:191.8px;background:#f6f6f6;'></div>
<div class='ab' style='left:722.37px;top:118.2px;width:2px;height:191.8px;background:#f6f6f6;'></div>
<div class='ab' style='left:721.37px;top:118.2px;width:1px;height:191.8px;background:#e6e6e6;'></div>
<div class='ab' style='left:721.57px;top:310px;width:1px;height:57px;background:#ececec;'></div>
<div class='ab' style='left:781.05px;top:118.2px;width:2px;height:191.8px;background:#f6f6f6;'></div>
<div class='ab' style='left:784.05px;top:118.2px;width:2px;height:191.8px;background:#f6f6f6;'></div>
<div class='ab' style='left:783.05px;top:118.2px;width:1px;height:191.8px;background:#e6e6e6;'></div>
<div class='ab' style='left:783.25px;top:310px;width:1px;height:57px;background:#ececec;'></div>
<div class='ab' style='left:842.73px;top:118.2px;width:2px;height:191.8px;background:#f6f6f6;'></div>
<div class='ab' style='left:845.73px;top:118.2px;width:2px;height:191.8px;background:#f6f6f6;'></div>
<div class='ab' style='left:844.73px;top:118.2px;width:1px;height:191.8px;background:#e6e6e6;'></div>
<div class='ab' style='left:844.93px;top:310px;width:1px;height:57px;background:#ececec;'></div>
<div class='ab' style='left:904.42px;top:118.2px;width:2px;height:191.8px;background:#f6f6f6;'></div>
<div class='ab' style='left:907.42px;top:118.2px;width:2px;height:191.8px;background:#f6f6f6;'></div>
<div class='ab' style='left:906.42px;top:118.2px;width:1px;height:191.8px;background:#e6e6e6;'></div>
<div class='ab' style='left:906.62px;top:310px;width:1px;height:57px;background:#ececec;'></div>
<div class='ab' style='left:238.2px;top:183.2px;width:7.8px;height:126.8px;background:#4472c4;'></div>
<div class='ab' style='left:249.37px;top:151.5px;width:7.8px;height:158.5px;background:#ed7d31;'></div>
<div class='ab' style='left:260.54px;top:252.94px;width:7.8px;height:57.06px;background:#a5a5a5;'></div>
<div class='ab' style='left:271.71px;top:265.62px;width:7.8px;height:44.38px;background:#ffc000;'></div>
<div class='t' style='left:258.44px;top:315.2px;font-size:7px;color:#5a5a5a;font-weight:400;transform:translateX(-50%) translateY(-50%);transform-origin:center center;'>Jan</div>
<div class='t' style='left:258.44px;top:326.4px;font-size:7px;color:#5a5a5a;font-weight:400;transform:translateX(-50%) translateY(-50%) scaleX(0.9469);transform-origin:center center;'>2,000</div>
<div class='t' style='left:258.44px;top:338px;font-size:7px;color:#5a5a5a;font-weight:400;transform:translateX(-50%) translateY(-50%) scaleX(0.9469);transform-origin:center center;'>2,500</div>
<div class='t' style='left:258.44px;top:349.2px;font-size:7px;color:#5a5a5a;font-weight:400;transform:translateX(-50%) translateY(-50%) scaleX(0.984);transform-origin:center center;'>900</div>
<div class='t' style='left:258.44px;top:360.5px;font-size:7px;color:#5a5a5a;font-weight:400;transform:translateX(-50%) translateY(-50%) scaleX(0.984);transform-origin:center center;'>700</div>
<div class='ab' style='left:300.01px;top:183.2px;width:7.8px;height:126.8px;background:#4472c4;'></div>
<div class='ab' style='left:311.18px;top:151.5px;width:7.8px;height:158.5px;background:#ed7d31;'></div>
<div class='ab' style='left:322.35px;top:252.94px;width:7.8px;height:57.06px;background:#a5a5a5;'></div>
<div class='ab' style='left:333.52px;top:265.62px;width:7.8px;height:44.38px;background:#ffc000;'></div>
<div class='t' style='left:320.12px;top:315.2px;font-size:7px;color:#5a5a5a;font-weight:400;transform:translateX(-50%) translateY(-50%);transform-origin:center center;'>Feb</div>
<div class='t' style='left:320.12px;top:326.4px;font-size:7px;color:#5a5a5a;font-weight:400;transform:translateX(-50%) translateY(-50%) scaleX(0.9469);transform-origin:center center;'>2,000</div>
<div class='t' style='left:320.12px;top:338px;font-size:7px;color:#5a5a5a;font-weight:400;transform:translateX(-50%) translateY(-50%) scaleX(0.9469);transform-origin:center center;'>2,500</div>
<div class='t' style='left:320.12px;top:349.2px;font-size:7px;color:#5a5a5a;font-weight:400;transform:translateX(-50%) translateY(-50%) scaleX(0.984);transform-origin:center center;'>900</div>
<div class='t' style='left:320.12px;top:360.5px;font-size:7px;color:#5a5a5a;font-weight:400;transform:translateX(-50%) translateY(-50%) scaleX(0.984);transform-origin:center center;'>700</div>
<div class='ab' style='left:361.82px;top:183.2px;width:7.8px;height:126.8px;background:#4472c4;'></div>
<div class='ab' style='left:372.99px;top:151.5px;width:7.8px;height:158.5px;background:#ed7d31;'></div>
<div class='ab' style='left:384.16px;top:252.94px;width:7.8px;height:57.06px;background:#a5a5a5;'></div>
<div class='ab' style='left:395.33px;top:265.62px;width:7.8px;height:44.38px;background:#ffc000;'></div>
<div class='t' style='left:381.81px;top:315.2px;font-size:7px;color:#5a5a5a;font-weight:400;transform:translateX(-50%) translateY(-50%);transform-origin:center center;'>Mar</div>
<div class='t' style='left:381.81px;top:326.4px;font-size:7px;color:#5a5a5a;font-weight:400;transform:translateX(-50%) translateY(-50%) scaleX(0.9469);transform-origin:center center;'>2,000</div>
<div class='t' style='left:381.81px;top:338px;font-size:7px;color:#5a5a5a;font-weight:400;transform:translateX(-50%) translateY(-50%) scaleX(0.9469);transform-origin:center center;'>2,500</div>
<div class='t' style='left:381.81px;top:349.2px;font-size:7px;color:#5a5a5a;font-weight:400;transform:translateX(-50%) translateY(-50%) scaleX(0.984);transform-origin:center center;'>900</div>
<div class='t' style='left:381.81px;top:360.5px;font-size:7px;color:#5a5a5a;font-weight:400;transform:translateX(-50%) translateY(-50%) scaleX(0.984);transform-origin:center center;'>700</div>
<div class='ab' style='left:423.63px;top:183.2px;width:7.8px;height:126.8px;background:#4472c4;'></div>
<div class='ab' style='left:434.8px;top:151.5px;width:7.8px;height:158.5px;background:#ed7d31;'></div>
<div class='ab' style='left:445.97px;top:252.94px;width:7.8px;height:57.06px;background:#a5a5a5;'></div>
<div class='ab' style='left:457.14px;top:265.62px;width:7.8px;height:44.38px;background:#ffc000;'></div>
<div class='t' style='left:443.49px;top:315.2px;font-size:7px;color:#5a5a5a;font-weight:400;transform:translateX(-50%) translateY(-50%);transform-origin:center center;'>Apr</div>
<div class='t' style='left:443.49px;top:326.4px;font-size:7px;color:#5a5a5a;font-weight:400;transform:translateX(-50%) translateY(-50%) scaleX(0.9469);transform-origin:center center;'>2,000</div>
<div class='t' style='left:443.49px;top:338px;font-size:7px;color:#5a5a5a;font-weight:400;transform:translateX(-50%) translateY(-50%) scaleX(0.9469);transform-origin:center center;'>2,500</div>
<div class='t' style='left:443.49px;top:349.2px;font-size:7px;color:#5a5a5a;font-weight:400;transform:translateX(-50%) translateY(-50%) scaleX(0.984);transform-origin:center center;'>900</div>
<div class='t' style='left:443.49px;top:360.5px;font-size:7px;color:#5a5a5a;font-weight:400;transform:translateX(-50%) translateY(-50%) scaleX(0.984);transform-origin:center center;'>700</div>
<div class='ab' style='left:485.44px;top:183.2px;width:7.8px;height:126.8px;background:#4472c4;'></div>
<div class='ab' style='left:496.61px;top:151.5px;width:7.8px;height:158.5px;background:#ed7d31;'></div>
<div class='ab' style='left:507.78px;top:252.94px;width:7.8px;height:57.06px;background:#a5a5a5;'></div>
<div class='ab' style='left:518.95px;top:265.62px;width:7.8px;height:44.38px;background:#ffc000;'></div>
<div class='t' style='left:505.17px;top:315.2px;font-size:7px;color:#5a5a5a;font-weight:400;transform:translateX(-50%) translateY(-50%);transform-origin:center center;'>May</div>
<div class='t' style='left:505.17px;top:326.4px;font-size:7px;color:#5a5a5a;font-weight:400;transform:translateX(-50%) translateY(-50%) scaleX(0.9469);transform-origin:center center;'>2,000</div>
<div class='t' style='left:505.17px;top:338px;font-size:7px;color:#5a5a5a;font-weight:400;transform:translateX(-50%) translateY(-50%) scaleX(0.9469);transform-origin:center center;'>2,500</div>
<div class='t' style='left:505.17px;top:349.2px;font-size:7px;color:#5a5a5a;font-weight:400;transform:translateX(-50%) translateY(-50%) scaleX(0.984);transform-origin:center center;'>900</div>
<div class='t' style='left:505.17px;top:360.5px;font-size:7px;color:#5a5a5a;font-weight:400;transform:translateX(-50%) translateY(-50%) scaleX(0.984);transform-origin:center center;'>700</div>
<div class='ab' style='left:547.25px;top:183.2px;width:7.8px;height:126.8px;background:#4472c4;'></div>
<div class='ab' style='left:558.42px;top:151.5px;width:7.8px;height:158.5px;background:#ed7d31;'></div>
<div class='ab' style='left:569.59px;top:252.94px;width:7.8px;height:57.06px;background:#a5a5a5;'></div>
<div class='ab' style='left:580.76px;top:265.62px;width:7.8px;height:44.38px;background:#ffc000;'></div>
<div class='t' style='left:566.86px;top:315.2px;font-size:7px;color:#5a5a5a;font-weight:400;transform:translateX(-50%) translateY(-50%);transform-origin:center center;'>Jun</div>
<div class='t' style='left:566.86px;top:326.4px;font-size:7px;color:#5a5a5a;font-weight:400;transform:translateX(-50%) translateY(-50%) scaleX(0.9469);transform-origin:center center;'>2,000</div>
<div class='t' style='left:566.86px;top:338px;font-size:7px;color:#5a5a5a;font-weight:400;transform:translateX(-50%) translateY(-50%) scaleX(0.9469);transform-origin:center center;'>2,500</div>
<div class='t' style='left:566.86px;top:349.2px;font-size:7px;color:#5a5a5a;font-weight:400;transform:translateX(-50%) translateY(-50%) scaleX(0.984);transform-origin:center center;'>900</div>
<div class='t' style='left:566.86px;top:360.5px;font-size:7px;color:#5a5a5a;font-weight:400;transform:translateX(-50%) translateY(-50%) scaleX(0.984);transform-origin:center center;'>700</div>
<div class='ab' style='left:609.06px;top:183.2px;width:7.8px;height:126.8px;background:#4472c4;'></div>
<div class='ab' style='left:620.23px;top:151.5px;width:7.8px;height:158.5px;background:#ed7d31;'></div>
<div class='ab' style='left:631.4px;top:252.94px;width:7.8px;height:57.06px;background:#a5a5a5;'></div>
<div class='ab' style='left:642.57px;top:265.62px;width:7.8px;height:44.38px;background:#ffc000;'></div>
<div class='t' style='left:628.54px;top:315.2px;font-size:7px;color:#5a5a5a;font-weight:400;transform:translateX(-50%) translateY(-50%);transform-origin:center center;'>Jul</div>
<div class='t' style='left:628.54px;top:326.4px;font-size:7px;color:#5a5a5a;font-weight:400;transform:translateX(-50%) translateY(-50%) scaleX(0.9469);transform-origin:center center;'>2,000</div>
<div class='t' style='left:628.54px;top:338px;font-size:7px;color:#5a5a5a;font-weight:400;transform:translateX(-50%) translateY(-50%) scaleX(0.9469);transform-origin:center center;'>2,500</div>
<div class='t' style='left:628.54px;top:349.2px;font-size:7px;color:#5a5a5a;font-weight:400;transform:translateX(-50%) translateY(-50%) scaleX(0.984);transform-origin:center center;'>900</div>
<div class='t' style='left:628.54px;top:360.5px;font-size:7px;color:#5a5a5a;font-weight:400;transform:translateX(-50%) translateY(-50%) scaleX(0.984);transform-origin:center center;'>700</div>
<div class='ab' style='left:670.87px;top:183.2px;width:7.8px;height:126.8px;background:#4472c4;'></div>
<div class='ab' style='left:682.04px;top:151.5px;width:7.8px;height:158.5px;background:#ed7d31;'></div>
<div class='ab' style='left:693.21px;top:252.94px;width:7.8px;height:57.06px;background:#a5a5a5;'></div>
<div class='ab' style='left:704.38px;top:265.62px;width:7.8px;height:44.38px;background:#ffc000;'></div>
<div class='t' style='left:690.23px;top:315.2px;font-size:7px;color:#5a5a5a;font-weight:400;transform:translateX(-50%) translateY(-50%);transform-origin:center center;'>Aug</div>
<div class='t' style='left:690.23px;top:326.4px;font-size:7px;color:#5a5a5a;font-weight:400;transform:translateX(-50%) translateY(-50%) scaleX(0.9469);transform-origin:center center;'>2,000</div>
<div class='t' style='left:690.23px;top:338px;font-size:7px;color:#5a5a5a;font-weight:400;transform:translateX(-50%) translateY(-50%) scaleX(0.9469);transform-origin:center center;'>2,500</div>
<div class='t' style='left:690.23px;top:349.2px;font-size:7px;color:#5a5a5a;font-weight:400;transform:translateX(-50%) translateY(-50%) scaleX(0.984);transform-origin:center center;'>900</div>
<div class='t' style='left:690.23px;top:360.5px;font-size:7px;color:#5a5a5a;font-weight:400;transform:translateX(-50%) translateY(-50%) scaleX(0.984);transform-origin:center center;'>700</div>
<div class='ab' style='left:732.68px;top:183.2px;width:7.8px;height:126.8px;background:#4472c4;'></div>
<div class='ab' style='left:743.85px;top:151.5px;width:7.8px;height:158.5px;background:#ed7d31;'></div>
<div class='ab' style='left:755.02px;top:252.94px;width:7.8px;height:57.06px;background:#a5a5a5;'></div>
<div class='ab' style='left:766.19px;top:265.62px;width:7.8px;height:44.38px;background:#ffc000;'></div>
<div class='t' style='left:751.91px;top:315.2px;font-size:7px;color:#5a5a5a;font-weight:400;transform:translateX(-50%) translateY(-50%);transform-origin:center center;'>Sep</div>
<div class='t' style='left:751.91px;top:326.4px;font-size:7px;color:#5a5a5a;font-weight:400;transform:translateX(-50%) translateY(-50%) scaleX(0.9469);transform-origin:center center;'>2,000</div>
<div class='t' style='left:751.91px;top:338px;font-size:7px;color:#5a5a5a;font-weight:400;transform:translateX(-50%) translateY(-50%) scaleX(0.9469);transform-origin:center center;'>2,500</div>
<div class='t' style='left:751.91px;top:349.2px;font-size:7px;color:#5a5a5a;font-weight:400;transform:translateX(-50%) translateY(-50%) scaleX(0.984);transform-origin:center center;'>900</div>
<div class='t' style='left:751.91px;top:360.5px;font-size:7px;color:#5a5a5a;font-weight:400;transform:translateX(-50%) translateY(-50%) scaleX(0.984);transform-origin:center center;'>700</div>
<div class='ab' style='left:794.49px;top:183.2px;width:7.8px;height:126.8px;background:#4472c4;'></div>
<div class='ab' style='left:805.66px;top:151.5px;width:7.8px;height:158.5px;background:#ed7d31;'></div>
<div class='ab' style='left:816.83px;top:252.94px;width:7.8px;height:57.06px;background:#a5a5a5;'></div>
<div class='ab' style='left:828.0px;top:265.62px;width:7.8px;height:44.38px;background:#ffc000;'></div>
<div class='t' style='left:813.59px;top:315.2px;font-size:7px;color:#5a5a5a;font-weight:400;transform:translateX(-50%) translateY(-50%);transform-origin:center center;'>Oct</div>
<div class='t' style='left:813.59px;top:326.4px;font-size:7px;color:#5a5a5a;font-weight:400;transform:translateX(-50%) translateY(-50%) scaleX(0.9469);transform-origin:center center;'>2,000</div>
<div class='t' style='left:813.59px;top:338px;font-size:7px;color:#5a5a5a;font-weight:400;transform:translateX(-50%) translateY(-50%) scaleX(0.9469);transform-origin:center center;'>2,500</div>
<div class='t' style='left:813.59px;top:349.2px;font-size:7px;color:#5a5a5a;font-weight:400;transform:translateX(-50%) translateY(-50%) scaleX(0.984);transform-origin:center center;'>900</div>
<div class='t' style='left:813.59px;top:360.5px;font-size:7px;color:#5a5a5a;font-weight:400;transform:translateX(-50%) translateY(-50%) scaleX(0.984);transform-origin:center center;'>700</div>
<div class='ab' style='left:856.3px;top:183.2px;width:7.8px;height:126.8px;background:#4472c4;'></div>
<div class='ab' style='left:867.47px;top:151.5px;width:7.8px;height:158.5px;background:#ed7d31;'></div>
<div class='ab' style='left:878.64px;top:252.94px;width:7.8px;height:57.06px;background:#a5a5a5;'></div>
<div class='ab' style='left:889.81px;top:265.62px;width:7.8px;height:44.38px;background:#ffc000;'></div>
<div class='t' style='left:875.27px;top:315.2px;font-size:7px;color:#5a5a5a;font-weight:400;transform:translateX(-50%) translateY(-50%);transform-origin:center center;'>Nov</div>
<div class='t' style='left:875.27px;top:326.4px;font-size:7px;color:#5a5a5a;font-weight:400;transform:translateX(-50%) translateY(-50%) scaleX(0.9469);transform-origin:center center;'>2,000</div>
<div class='t' style='left:875.27px;top:338px;font-size:7px;color:#5a5a5a;font-weight:400;transform:translateX(-50%) translateY(-50%) scaleX(0.9469);transform-origin:center center;'>2,500</div>
<div class='t' style='left:875.27px;top:349.2px;font-size:7px;color:#5a5a5a;font-weight:400;transform:translateX(-50%) translateY(-50%) scaleX(0.984);transform-origin:center center;'>900</div>
<div class='t' style='left:875.27px;top:360.5px;font-size:7px;color:#5a5a5a;font-weight:400;transform:translateX(-50%) translateY(-50%) scaleX(0.984);transform-origin:center center;'>700</div>
<div class='ab' style='left:918.11px;top:183.2px;width:7.8px;height:126.8px;background:#4472c4;'></div>
<div class='ab' style='left:929.28px;top:151.5px;width:7.8px;height:158.5px;background:#ed7d31;'></div>
<div class='ab' style='left:940.45px;top:252.94px;width:7.8px;height:57.06px;background:#a5a5a5;'></div>
<div class='ab' style='left:951.62px;top:265.62px;width:7.8px;height:44.38px;background:#ffc000;'></div>
<div class='t' style='left:936.96px;top:315.2px;font-size:7px;color:#5a5a5a;font-weight:400;transform:translateX(-50%) translateY(-50%);transform-origin:center center;'>Dec</div>
<div class='t' style='left:936.96px;top:326.4px;font-size:7px;color:#5a5a5a;font-weight:400;transform:translateX(-50%) translateY(-50%) scaleX(0.9469);transform-origin:center center;'>2,000</div>
<div class='t' style='left:936.96px;top:338px;font-size:7px;color:#5a5a5a;font-weight:400;transform:translateX(-50%) translateY(-50%) scaleX(0.9469);transform-origin:center center;'>2,500</div>
<div class='t' style='left:936.96px;top:349.2px;font-size:7px;color:#5a5a5a;font-weight:400;transform:translateX(-50%) translateY(-50%) scaleX(0.984);transform-origin:center center;'>900</div>
<div class='t' style='left:936.96px;top:360.5px;font-size:7px;color:#5a5a5a;font-weight:400;transform:translateX(-50%) translateY(-50%) scaleX(0.984);transform-origin:center center;'>700</div>
<div class='ab' style='left:33px;top:320.5px;width:934.8px;height:1px;background:#f2f2f2;'></div>
<div class='ab' style='left:33px;top:332.3px;width:934.8px;height:1px;background:#f2f2f2;'></div>
<div class='ab' style='left:33px;top:343.8px;width:934.8px;height:1px;background:#f2f2f2;'></div>
<div class='ab' style='left:33px;top:355.3px;width:934.8px;height:1px;background:#f2f2f2;'></div>
<div class='ab' style='left:33px;top:367px;width:934.8px;height:1px;background:#f2f2f2;'></div>
<div class='ab' style='left:227.1px;top:310px;width:1px;height:57px;background:#e6e6e6;'></div>
<div class='ab' style='left:967.3px;top:310px;width:1px;height:57px;background:#e6e6e6;'></div>
<div class='ab' style='left:33px;top:320.5px;width:1px;height:47px;background:#f2f2f2;'></div>
<div class='ab' style='left:35.7px;top:324.8px;width:4px;height:4px;background:#4472c4;'></div>
<div class='t' style='left:41.8px;top:326.2px;font-size:7px;color:#5a5a5a;font-weight:400;transform:translateY(-50%) scaleX(0.8275);transform-origin:left center;'>Charging Fees</div>
<div class='ab' style='left:35.7px;top:336.4px;width:4px;height:4px;background:#ed7d31;'></div>
<div class='t' style='left:41.8px;top:337.8px;font-size:7px;color:#5a5a5a;font-weight:400;transform:translateY(-50%) scaleX(0.8981);transform-origin:left center;'>Revenue from in store sales (groceries, coffee, etc.)</div>
<div class='ab' style='left:35.7px;top:347.6px;width:4px;height:4px;background:#a5a5a5;'></div>
<div class='t' style='left:41.8px;top:349.0px;font-size:7px;color:#5a5a5a;font-weight:400;transform:translateY(-50%) scaleX(0.8848);transform-origin:left center;'>Revenue from selling charging accessories (cables, adapters, etc.)</div>
<div class='ab' style='left:35.7px;top:358.8px;width:4px;height:4px;background:#ffc000;'></div>
<div class='t' style='left:41.8px;top:360.2px;font-size:7px;color:#5a5a5a;font-weight:400;transform:translateY(-50%) scaleX(0.9116);transform-origin:left center;'>Advertising revenue (e.g. paid partnerships with brands)</div>
<div class='ab' style='left:22.5px;top:370px;width:955px;height:4px;background:#f2f2f2;'></div>
<div class='ab' style='left:22.5px;top:374px;width:953px;height:185px;background:#ffffff;'></div>
<div class='ab' style='left:21.8px;top:374px;width:1px;height:185px;background:#ececec;'></div>
<div class='ab' style='left:975px;top:374px;width:1.5px;height:185px;background:#ececec;'></div>
<div class='t' style='left:426.5px;top:387.9px;font-size:13.3px;color:#676767;font-weight:400;transform:translateY(-50%) scaleX(0.8832);transform-origin:left center;'>Parking Licensing Services</div>
<div class='ab' style='left:80px;top:408px;width:4px;height:4px;background:#4472c4;'></div>
<div class='t' style='left:85.8px;top:410px;font-size:7.5px;color:#5a5a5a;font-weight:400;transform:translateY(-50%) scaleX(0.9572);transform-origin:left center;'>Premium parking revenue</div>
<div class='ab' style='left:182px;top:408px;width:4px;height:4px;background:#ed7d31;'></div>
<div class='t' style='left:187.8px;top:410px;font-size:7.5px;color:#5a5a5a;font-weight:400;transform:translateY(-50%) scaleX(0.9118);transform-origin:left center;'>Energy resale</div>
<div class='ab' style='left:244.6px;top:408px;width:4px;height:4px;background:#a5a5a5;'></div>
<div class='t' style='left:251px;top:410px;font-size:7.5px;color:#5a5a5a;font-weight:400;transform:translateY(-50%) scaleX(0.9473);transform-origin:left center;'>Licensing fees for use of proprietary charging software</div>
<div class='ab' style='left:436.6px;top:408px;width:4px;height:4px;background:#ffc000;'></div>
<div class='t' style='left:443.4px;top:410px;font-size:7.5px;color:#5a5a5a;font-weight:400;transform:translateY(-50%) scaleX(0.951);transform-origin:left center;'>Data sharing agreements with automakers or energy companies</div>
<div class='ab' style='left:660.5px;top:408px;width:4px;height:4px;background:#5b9bd5;'></div>
<div class='t' style='left:667px;top:410px;font-size:7.5px;color:#5a5a5a;font-weight:400;transform:translateY(-50%) scaleX(0.9595);transform-origin:left center;'>Sponsorship revenue from events or promotional activities at charging stations</div>
<div class='ab' style='left:264.4px;top:426px;width:701.8px;height:133px;background:#f3f3f3;'></div>
<div class='t' style='left:258.2px;top:426.0px;font-size:7px;color:#5a5a5a;font-weight:400;transform:translateX(-100%) translateY(-50%) scaleX(1.0439);transform-origin:right center;'>800</div>
<div class='ab' style='left:264.4px;top:447.0px;width:701.8px;height:2px;background:#f7f7f7;'></div>
<div class='ab' style='left:264.4px;top:448.5px;width:701.8px;height:1px;background:#e4e4e4;'></div>
<div class='t' style='left:258.2px;top:449.0px;font-size:7px;color:#5a5a5a;font-weight:400;transform:translateX(-100%) translateY(-50%) scaleX(1.0439);transform-origin:right center;'>700</div>
<div class='ab' style='left:264.4px;top:470.0px;width:701.8px;height:2px;background:#f7f7f7;'></div>
<div class='ab' style='left:264.4px;top:471.5px;width:701.8px;height:1px;background:#e4e4e4;'></div>
<div class='t' style='left:258.2px;top:472.0px;font-size:7px;color:#5a5a5a;font-weight:400;transform:translateX(-100%) translateY(-50%) scaleX(1.0439);transform-origin:right center;'>600</div>
<div class='ab' style='left:264.4px;top:493.0px;width:701.8px;height:2px;background:#f7f7f7;'></div>
<div class='ab' style='left:264.4px;top:494.5px;width:701.8px;height:1px;background:#e4e4e4;'></div>
<div class='t' style='left:258.2px;top:495.0px;font-size:7px;color:#5a5a5a;font-weight:400;transform:translateX(-100%) translateY(-50%) scaleX(1.0439);transform-origin:right center;'>500</div>
<div class='ab' style='left:264.4px;top:516.0px;width:701.8px;height:2px;background:#f7f7f7;'></div>
<div class='ab' style='left:264.4px;top:517.5px;width:701.8px;height:1px;background:#e4e4e4;'></div>
<div class='t' style='left:258.2px;top:518.0px;font-size:7px;color:#5a5a5a;font-weight:400;transform:translateX(-100%) translateY(-50%) scaleX(1.0439);transform-origin:right center;'>400</div>
<div class='ab' style='left:264.4px;top:539.0px;width:701.8px;height:2px;background:#f7f7f7;'></div>
<div class='ab' style='left:264.4px;top:540.5px;width:701.8px;height:1px;background:#e4e4e4;'></div>
<div class='t' style='left:258.2px;top:541.0px;font-size:7px;color:#5a5a5a;font-weight:400;transform:translateX(-100%) translateY(-50%) scaleX(1.0439);transform-origin:right center;'>300</div>
<div class='ab' style='left:322.36px;top:426px;width:2px;height:133px;background:#f6f6f6;'></div>
<div class='ab' style='left:325.36px;top:426px;width:2px;height:133px;background:#f6f6f6;'></div>
<div class='ab' style='left:324.36px;top:426px;width:1px;height:133px;background:#e6e6e6;'></div>
<div class='ab' style='left:380.72px;top:426px;width:2px;height:133px;background:#f6f6f6;'></div>
<div class='ab' style='left:383.72px;top:426px;width:2px;height:133px;background:#f6f6f6;'></div>
<div class='ab' style='left:382.72px;top:426px;width:1px;height:133px;background:#e6e6e6;'></div>
<div class='ab' style='left:439.08px;top:426px;width:2px;height:133px;background:#f6f6f6;'></div>
<div class='ab' style='left:442.08px;top:426px;width:2px;height:133px;background:#f6f6f6;'></div>
<div class='ab' style='left:441.08px;top:426px;width:1px;height:133px;background:#e6e6e6;'></div>
<div class='ab' style='left:497.44px;top:426px;width:2px;height:133px;background:#f6f6f6;'></div>
<div class='ab' style='left:500.44px;top:426px;width:2px;height:133px;background:#f6f6f6;'></div>
<div class='ab' style='left:499.44px;top:426px;width:1px;height:133px;background:#e6e6e6;'></div>
<div class='ab' style='left:555.8px;top:426px;width:2px;height:133px;background:#f6f6f6;'></div>
<div class='ab' style='left:558.8px;top:426px;width:2px;height:133px;background:#f6f6f6;'></div>
<div class='ab' style='left:557.8px;top:426px;width:1px;height:133px;background:#e6e6e6;'></div>
<div class='ab' style='left:614.16px;top:426px;width:2px;height:133px;background:#f6f6f6;'></div>
<div class='ab' style='left:617.16px;top:426px;width:2px;height:133px;background:#f6f6f6;'></div>
<div class='ab' style='left:616.16px;top:426px;width:1px;height:133px;background:#e6e6e6;'></div>
<div class='ab' style='left:672.52px;top:426px;width:2px;height:133px;background:#f6f6f6;'></div>
<div class='ab' style='left:675.52px;top:426px;width:2px;height:133px;background:#f6f6f6;'></div>
<div class='ab' style='left:674.52px;top:426px;width:1px;height:133px;background:#e6e6e6;'></div>
<div class='ab' style='left:730.88px;top:426px;width:2px;height:133px;background:#f6f6f6;'></div>
<div class='ab' style='left:733.88px;top:426px;width:2px;height:133px;background:#f6f6f6;'></div>
<div class='ab' style='left:732.88px;top:426px;width:1px;height:133px;background:#e6e6e6;'></div>
<div class='ab' style='left:789.24px;top:426px;width:2px;height:133px;background:#f6f6f6;'></div>
<div class='ab' style='left:792.24px;top:426px;width:2px;height:133px;background:#f6f6f6;'></div>
<div class='ab' style='left:791.24px;top:426px;width:1px;height:133px;background:#e6e6e6;'></div>
<div class='ab' style='left:847.6px;top:426px;width:2px;height:133px;background:#f6f6f6;'></div>
<div class='ab' style='left:850.6px;top:426px;width:2px;height:133px;background:#f6f6f6;'></div>
<div class='ab' style='left:849.6px;top:426px;width:1px;height:133px;background:#e6e6e6;'></div>
<div class='ab' style='left:905.96px;top:426px;width:2px;height:133px;background:#f6f6f6;'></div>
<div class='ab' style='left:908.96px;top:426px;width:2px;height:133px;background:#f6f6f6;'></div>
<div class='ab' style='left:907.96px;top:426px;width:1px;height:133px;background:#e6e6e6;'></div>
<div class='ab' style='left:273.7px;top:506.5px;width:6.6px;height:52.5px;background:#4472c4;'></div>
<div class='ab' style='left:282.73px;top:541.0px;width:6.6px;height:18.0px;background:#ed7d31;'></div>
<div class='ab' style='left:291.76px;top:506.5px;width:6.6px;height:52.5px;background:#a5a5a5;'></div>
<div class='ab' style='left:309.82px;top:449.0px;width:6.6px;height:110.0px;background:#5b9bd5;'></div>
<div class='ab' style='left:332.06px;top:506.5px;width:6.6px;height:52.5px;background:#4472c4;'></div>
<div class='ab' style='left:341.09px;top:541.0px;width:6.6px;height:18.0px;background:#ed7d31;'></div>
<div class='ab' style='left:350.12px;top:506.5px;width:6.6px;height:52.5px;background:#a5a5a5;'></div>
<div class='ab' style='left:368.18px;top:449.0px;width:6.6px;height:110.0px;background:#5b9bd5;'></div>
<div class='ab' style='left:390.42px;top:506.5px;width:6.6px;height:52.5px;background:#4472c4;'></div>
<div class='ab' style='left:399.45px;top:541.0px;width:6.6px;height:18.0px;background:#ed7d31;'></div>
<div class='ab' style='left:408.48px;top:506.5px;width:6.6px;height:52.5px;background:#a5a5a5;'></div>
<div class='ab' style='left:426.54px;top:449.0px;width:6.6px;height:110.0px;background:#5b9bd5;'></div>
<div class='ab' style='left:448.78px;top:506.5px;width:6.6px;height:52.5px;background:#4472c4;'></div>
<div class='ab' style='left:457.81px;top:541.0px;width:6.6px;height:18.0px;background:#ed7d31;'></div>
<div class='ab' style='left:466.84px;top:506.5px;width:6.6px;height:52.5px;background:#a5a5a5;'></div>
<div class='ab' style='left:484.9px;top:449.0px;width:6.6px;height:110.0px;background:#5b9bd5;'></div>
<div class='ab' style='left:507.14px;top:506.5px;width:6.6px;height:52.5px;background:#4472c4;'></div>
<div class='ab' style='left:516.17px;top:541.0px;width:6.6px;height:18.0px;background:#ed7d31;'></div>
<div class='ab' style='left:525.2px;top:506.5px;width:6.6px;height:52.5px;background:#a5a5a5;'></div>
<div class='ab' style='left:543.26px;top:449.0px;width:6.6px;height:110.0px;background:#5b9bd5;'></div>
<div class='ab' style='left:565.5px;top:506.5px;width:6.6px;height:52.5px;background:#4472c4;'></div>
<div class='ab' style='left:574.53px;top:541.0px;width:6.6px;height:18.0px;background:#ed7d31;'></div>
<div class='ab' style='left:583.56px;top:506.5px;width:6.6px;height:52.5px;background:#a5a5a5;'></div>
<div class='ab' style='left:601.62px;top:449.0px;width:6.6px;height:110.0px;background:#5b9bd5;'></div>
<div class='ab' style='left:623.86px;top:506.5px;width:6.6px;height:52.5px;background:#4472c4;'></div>
<div class='ab' style='left:632.89px;top:541.0px;width:6.6px;height:18.0px;background:#ed7d31;'></div>
<div class='ab' style='left:641.92px;top:506.5px;width:6.6px;height:52.5px;background:#a5a5a5;'></div>
<div class='ab' style='left:659.98px;top:449.0px;width:6.6px;height:110.0px;background:#5b9bd5;'></div>
<div class='ab' style='left:682.22px;top:506.5px;width:6.6px;height:52.5px;background:#4472c4;'></div>
<div class='ab' style='left:691.25px;top:541.0px;width:6.6px;height:18.0px;background:#ed7d31;'></div>
<div class='ab' style='left:700.28px;top:506.5px;width:6.6px;height:52.5px;background:#a5a5a5;'></div>
<div class='ab' style='left:718.34px;top:449.0px;width:6.6px;height:110.0px;background:#5b9bd5;'></div>
<div class='ab' style='left:740.58px;top:506.5px;width:6.6px;height:52.5px;background:#4472c4;'></div>
<div class='ab' style='left:749.61px;top:541.0px;width:6.6px;height:18.0px;background:#ed7d31;'></div>
<div class='ab' style='left:758.64px;top:506.5px;width:6.6px;height:52.5px;background:#a5a5a5;'></div>
<div class='ab' style='left:776.7px;top:449.0px;width:6.6px;height:110.0px;background:#5b9bd5;'></div>
<div class='ab' style='left:798.94px;top:506.5px;width:6.6px;height:52.5px;background:#4472c4;'></div>
<div class='ab' style='left:807.97px;top:541.0px;width:6.6px;height:18.0px;background:#ed7d31;'></div>
<div class='ab' style='left:817.0px;top:506.5px;width:6.6px;height:52.5px;background:#a5a5a5;'></div>
<div class='ab' style='left:835.06px;top:449.0px;width:6.6px;height:110.0px;background:#5b9bd5;'></div>
<div class='ab' style='left:857.3px;top:506.5px;width:6.6px;height:52.5px;background:#4472c4;'></div>
<div class='ab' style='left:866.33px;top:541.0px;width:6.6px;height:18.0px;background:#ed7d31;'></div>
<div class='ab' style='left:875.36px;top:506.5px;width:6.6px;height:52.5px;background:#a5a5a5;'></div>
<div class='ab' style='left:893.42px;top:449.0px;width:6.6px;height:110.0px;background:#5b9bd5;'></div>
<div class='ab' style='left:915.66px;top:506.5px;width:6.6px;height:52.5px;background:#4472c4;'></div>
<div class='ab' style='left:924.69px;top:541.0px;width:6.6px;height:18.0px;background:#ed7d31;'></div>
<div class='ab' style='left:933.72px;top:506.5px;width:6.6px;height:52.5px;background:#a5a5a5;'></div>
<div class='ab' style='left:951.78px;top:449.0px;width:6.6px;height:110.0px;background:#5b9bd5;'></div>
<div class='ab' style='left:0px;top:559px;width:1000px;height:17.5px;background:#e9eaed;'></div>
<div class='ab' style='left:0px;top:576.5px;width:1000px;height:2.5px;background:#e4e4e4;'></div>
<svg style='left:17px;top:565px' width='6' height='10' viewBox='0 0 6 10'><path d='M4.5 1 L1.5 5 L4.5 9' fill='none' stroke='#b5b5b5' stroke-width='1'/></svg>
<svg style='left:37px;top:565px' width='6' height='10' viewBox='0 0 6 10'><path d='M1.5 1 L4.5 5 L1.5 9' fill='none' stroke='#555' stroke-width='1'/></svg>
<div class='t' style='left:79px;top:569.8px;font-size:9.3px;color:#1a1a1a;font-weight:400;transform:translateY(-50%) scaleX(0.9726);transform-origin:left center;'>How To</div>
<div class='ab' style='left:121.6px;top:560.5px;width:70.9px;height:16px;background:#f8f88a;'></div>
<div class='t' style='left:127.6px;top:569.8px;font-size:9.3px;color:#1a1a1a;font-weight:400;transform:translateY(-50%) scaleX(0.9738);transform-origin:left center;'>2025 Accounts</div>
<div class='t' style='left:204.5px;top:569.8px;font-size:9.3px;color:#1a1a1a;font-weight:400;transform:translateY(-50%) scaleX(0.9458);transform-origin:left center;'>2025 MRR Dashboard</div>
<div class='ab' style='left:305px;top:560.5px;width:41px;height:16px;background:#f8f88a;'></div>
<div class='t' style='left:310px;top:569.8px;font-size:9.3px;color:#1a1a1a;font-weight:400;transform:translateY(-50%) scaleX(0.9357);transform-origin:left center;'>IS 2025</div>
<div class='t' style='left:356.8px;top:569.8px;font-size:9.3px;color:#1a1a1a;font-weight:400;transform:translateY(-50%) scaleX(0.9027);transform-origin:left center;'>CF 2025</div>
<div class='t' style='left:406px;top:569.8px;font-size:9.3px;color:#1a1a1a;font-weight:400;transform:translateY(-50%) scaleX(0.9083);transform-origin:left center;'>BS 2025</div>
<div class='t' style='left:456.5px;top:569.8px;font-size:9.3px;color:#1a1a1a;font-weight:400;transform:translateY(-50%) scaleX(0.9596);transform-origin:left center;'>Statements Summary 2025</div>
<div class='ab' style='left:575.7px;top:559px;width:87px;height:19px;background:#ffffff;'></div>
<div class='ab' style='left:582px;top:574.4px;width:74px;height:1.5px;background:#2f855a;'></div>
<div class='t' style='left:582.6px;top:568.2px;font-size:9.3px;color:#1a1a1a;font-weight:400;transform:translateY(-50%) scaleX(0.9551);transform-origin:left center;-webkit-text-stroke:0.4px #1a1a1a;'>PAYG 2025 Charts</div>
<div class='t' style='left:673.6px;top:569.8px;font-size:9.3px;color:#1a1a1a;font-weight:400;transform:translateY(-50%) scaleX(0.9738);transform-origin:left center;'>2026 Accounts</div>
<div class='t' style='left:751px;top:569.8px;font-size:9.3px;color:#1a1a1a;font-weight:400;transform:translateY(-50%) scaleX(0.9469);transform-origin:left center;'>2026 MRR Dashboard</div>
<div class='ab' style='left:853.9px;top:560.5px;width:27.1px;height:16px;background:#f8f88a;'></div>
<div class='t' style='left:857px;top:569.8px;font-size:9.3px;color:#1a1a1a;font-weight:400;transform:translateY(-50%) scaleX(0.8925);transform-origin:left center;'>IS 202</div>
<div class='ab' style='left:881px;top:559px;width:103px;height:19px;background:#e9eaed;'></div>
<div class='t' style='left:891.5px;top:568.5px;font-size:6px;color:#333;font-weight:400;transform:translateX(-50%) translateY(-50%);transform-origin:center center;'>&#8226;&#8226;&#8226;</div>
<svg style='left:906px;top:564px' width='10' height='10' viewBox='0 0 10 10'><path d='M5 1 L5 9 M1 5 L9 5' stroke='#333' stroke-width='1'/></svg>
<svg style='left:930px;top:564px' width='4' height='10' viewBox='0 0 4 10'><circle cx='2' cy='2' r='0.8' fill='#444'/><circle cx='2' cy='5' r='0.8' fill='#444'/><circle cx='2' cy='8' r='0.8' fill='#444'/></svg>
<svg style='left:944px;top:565px' width='6' height='8' viewBox='0 0 6 8'><path d='M5 1 L1 4 L5 7 Z' fill='#444'/></svg>
<div class='ab' style='left:954px;top:566px;width:21px;height:5px;background:#6e6e6e;border-radius:2.5px'></div>
<svg style='left:980px;top:565px' width='6' height='8' viewBox='0 0 6 8'><path d='M1 1 L5 4 L1 7 Z' fill='#444'/></svg>
<div class='ab' style='left:0px;top:579px;width:1000px;height:12px;background:#f3f3f3;'></div>
<div class='t' style='left:7.7px;top:587px;font-size:7.5px;color:#444;font-weight:400;transform:translateY(-50%) scaleX(0.92);transform-origin:left center;'>Ready</div>
<svg style='left:39px;top:583px' width='10' height='9' viewBox='0 0 10 9'><rect x='0.5' y='0.5' width='8.5' height='8' fill='none' stroke='#5a5a5a' stroke-width='1'/><rect x='0.5' y='0.5' width='8.5' height='2' fill='#5a5a5a'/><path d='M3 3 V8 M6 3 V8 M1 5.5 H8.5' stroke='#8a8a8a' stroke-width='0.8'/><circle cx='6.5' cy='6.3' r='1.4' fill='#222'/></svg>
<svg style='left:59px;top:582px' width='10' height='10' viewBox='0 0 10 10'><path d='M1 3.2 L9 3.2 M3 3 C3 1 7 1 7 3' fill='none' stroke='#555' stroke-width='1.2'/><path d='M2.5 4.5 L5 6 L7.5 4.5 M5 6 L4 9 M5 6 L6.5 9' fill='none' stroke='#555' stroke-width='1.1'/></svg>
<div class='t' style='left:72.2px;top:586.8px;font-size:7.3px;color:#222;font-weight:700;transform:translateY(-50%) scaleX(0.9002);transform-origin:left center;'>Accessibility: Investigate</div>
<svg style='left:815px;top:581px' width='10' height='9' viewBox='0 0 10 9'><rect x='0.5' y='0.5' width='9' height='8' fill='none' stroke='#444' stroke-width='1'/><path d='M0.5 3.5 L9.5 3.5 M0.5 6 L9.5 6 M3.5 0.5 L3.5 8.5 M6.5 0.5 L6.5 8.5' stroke='#444' stroke-width='0.8'/></svg>
<svg style='left:840px;top:581px' width='10' height='9' viewBox='0 0 10 9'><rect x='0.5' y='0.5' width='9' height='8' fill='none' stroke='#555' stroke-width='1'/><rect x='1' y='1' width='1.8' height='7' fill='#555'/><rect x='7.2' y='1' width='1.8' height='7' fill='#555'/></svg>
<svg style='left:866px;top:581px' width='10' height='9' viewBox='0 0 10 9'><path d='M0.5 0.5 H9.5 V8.5 H0.5 Z' fill='none' stroke='#555' stroke-width='1'/><path d='M3 0.5 V4.5 H7 V0.5' fill='none' stroke='#555' stroke-width='1'/></svg>
<div class='ab' style='left:889px;top:586px;width:5px;height:1px;background:#555;'></div>
<div class='ab' style='left:894px;top:586px;width:72px;height:1px;background:#999;'></div>
<div class='ab' style='left:928.5px;top:582px;width:2.8px;height:8px;background:#555;'></div>
<svg style='left:964px;top:582px' width='8' height='8' viewBox='0 0 8 8'><path d='M4 0.5 L4 7.5 M0.5 4 L7.5 4' stroke='#555' stroke-width='1'/></svg>
<div class='t' style='left:978px;top:586.5px;font-size:7.2px;color:#444;font-weight:400;transform:translateY(-50%) scaleX(0.92);transform-origin:left center;'>100%</div>
</body></html>
